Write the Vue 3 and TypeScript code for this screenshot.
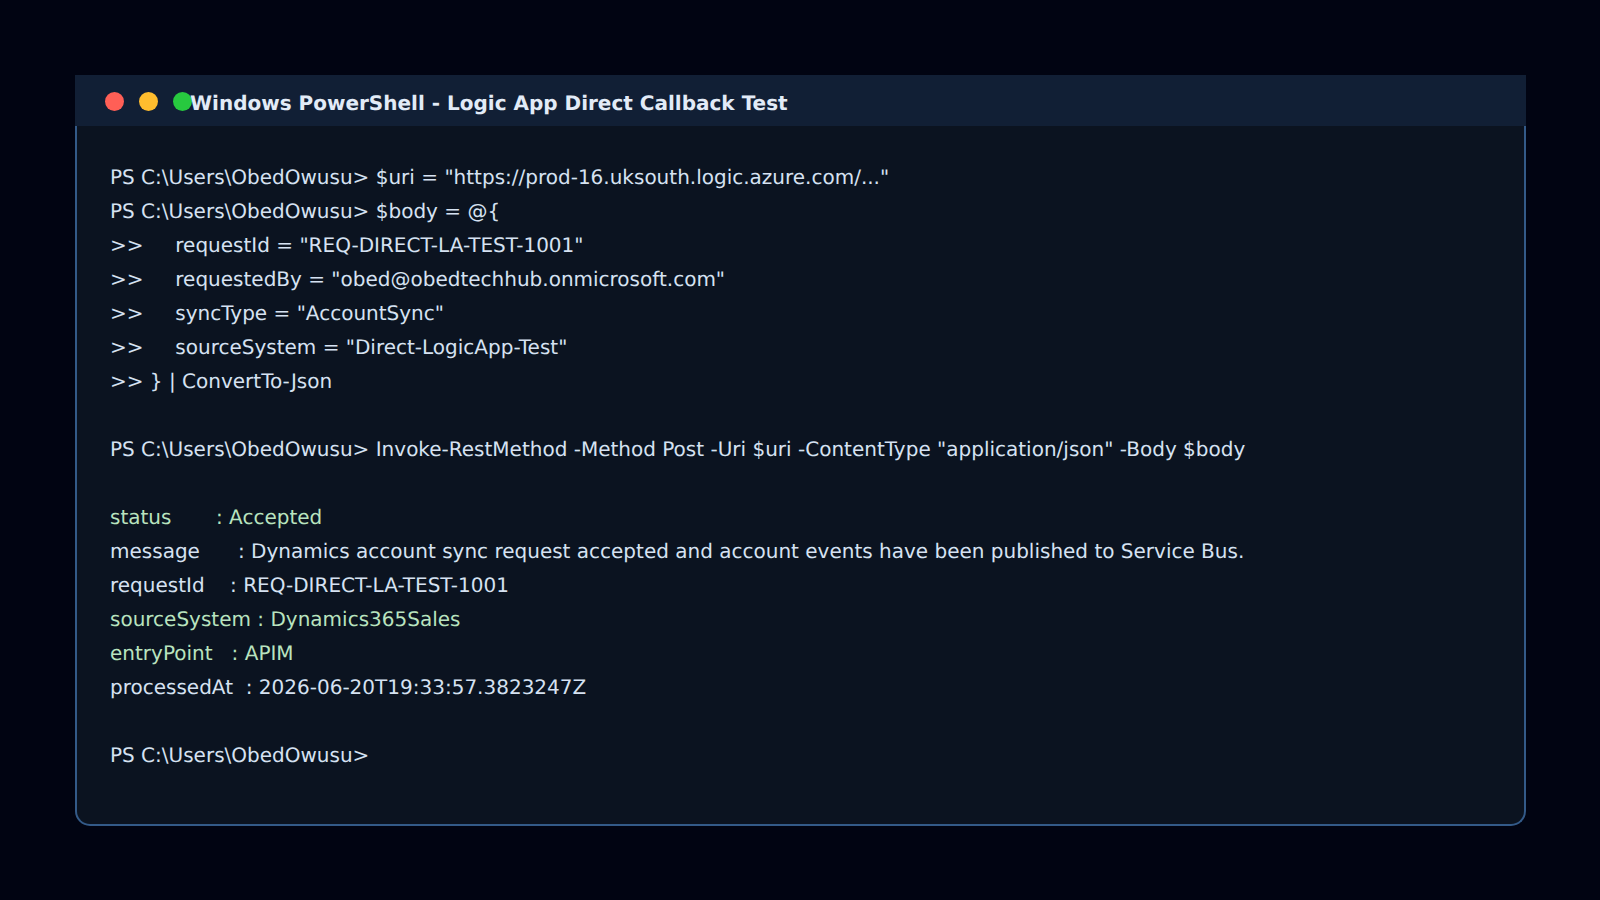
<script setup lang="ts">
// 终端窗口的每一行
interface Line {
  text: string;
  ok?: boolean;
}

const prompt = 'PS C:\\Users\\ObedOwusu>';

const lines: Line[] = [
  { text: `${prompt} $uri = "https://prod-16.uksouth.logic.azure.com/..."` },
  { text: `${prompt} $body = @{` },
  { text: '>>     requestId = "REQ-DIRECT-LA-TEST-1001"' },
  { text: '>>     requestedBy = "obed@obedtechhub.onmicrosoft.com"' },
  { text: '>>     syncType = "AccountSync"' },
  { text: '>>     sourceSystem = "Direct-LogicApp-Test"' },
  { text: '>> } | ConvertTo-Json' },
  { text: '' },
  { text: `${prompt} Invoke-RestMethod -Method Post -Uri $uri -ContentType "application/json" -Body $body` },
  { text: '' },
  { text: 'status       : Accepted', ok: true },
  { text: 'message      : Dynamics account sync request accepted and account events have been published to Service Bus.' },
  { text: 'requestId    : REQ-DIRECT-LA-TEST-1001' },
  { text: 'sourceSystem : Dynamics365Sales', ok: true },
  { text: 'entryPoint   : APIM', ok: true },
  { text: 'processedAt  : 2026-06-20T19:33:57.3823247Z' },
  { text: '' },
  { text: prompt },
];
</script>

<template>
  <div class="page">
    <div class="window">
      <div class="titlebar">
        <span class="dot red"></span>
        <span class="dot yellow"></span>
        <span class="dot green"></span>
        <span class="title">Windows PowerShell - Logic App Direct Callback Test</span>
      </div>
      <div class="terminal">
        <div v-for="(line, i) in lines" :key="i" class="line" :class="{ ok: line.ok }">{{ line.text }}</div>
      </div>
    </div>
  </div>
</template>

<style>
html,
body {
  margin: 0;
  background: #010412;
}
</style>

<style scoped>
.page {
  box-sizing: border-box;
  width: 1600px;
  height: 900px;
  padding: 75px 74px 74px 75px;
  background: #010412;
  font-family: "DejaVu Sans", sans-serif;
  text-rendering: geometricPrecision;
}

.window {
  display: flex;
  flex-direction: column;
  height: 100%;
}

.titlebar {
  display: flex;
  align-items: center;
  gap: 15px;
  height: 51px;
  padding: 0 30px;
  background: #111f35;
}

.dot {
  width: 19px;
  height: 19px;
  margin-top: 1px;
  border-radius: 50%;
}

.red {
  background: #ff5f56;
}

.yellow {
  background: #ffbd2e;
}

.green {
  background: #27c93f;
}

.title {
  margin-top: 4px;
  margin-left: -17px;
  color: #e2ebf7;
  font-size: 20px;
  font-weight: 700;
}

.terminal {
  flex: 1;
  box-sizing: border-box;
  padding: 34px 33px 0;
  border: 2px solid #335a88;
  border-top: none;
  border-radius: 0 0 15px 15px;
  background: #0b1320;
}

.line {
  height: 34px;
  color: #d6e2f2;
  font-size: 20px;
  line-height: 34px;
  white-space: pre;
}

.ok {
  color: #b9e3bf;
}
</style>
